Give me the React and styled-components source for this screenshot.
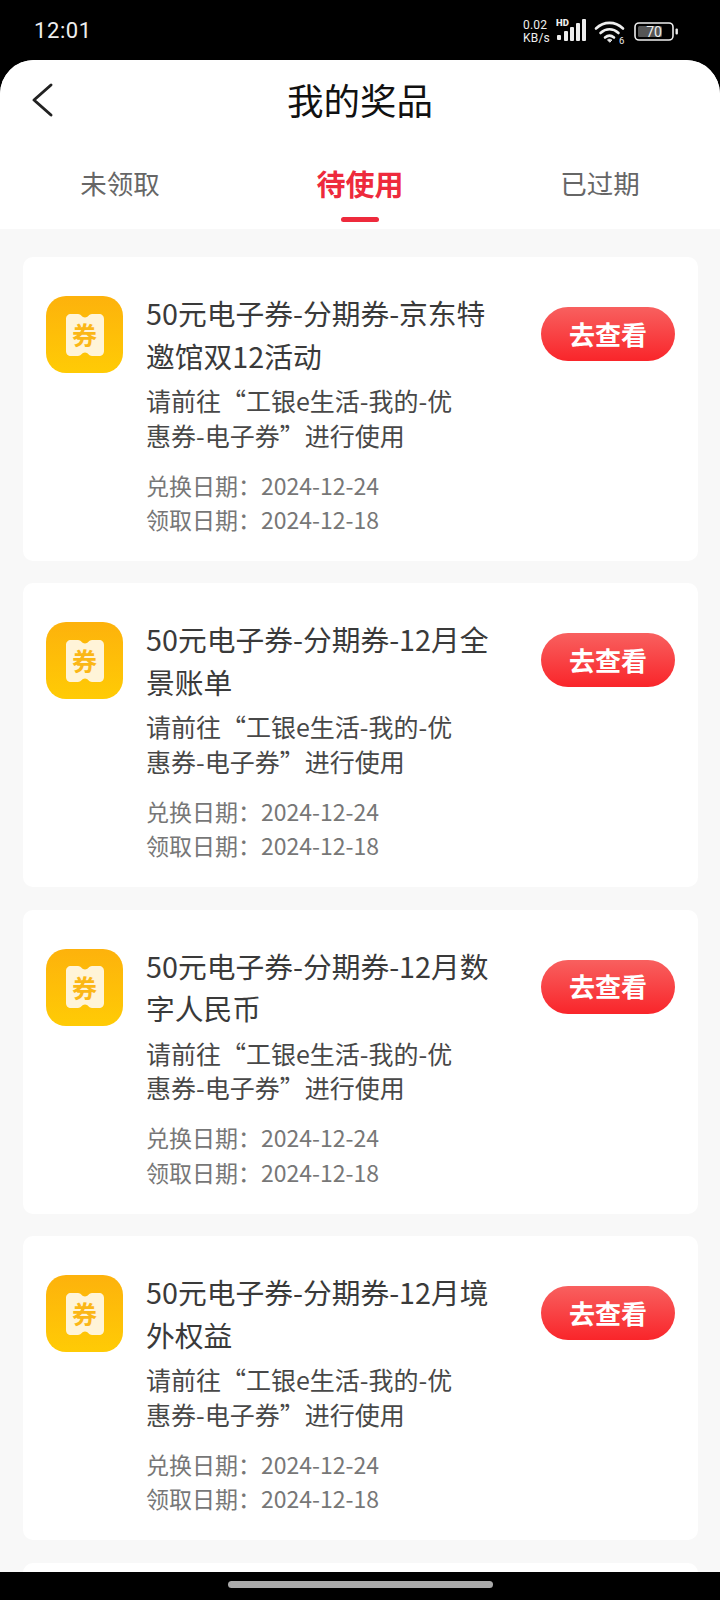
import React from "react";
import styled, { createGlobalStyle } from "styled-components";

const Global = createGlobalStyle`
  html, body { margin: 0; padding: 0; background: #000; }
  * { box-sizing: border-box; }
`;

const Font = `"Noto Sans CJK SC", "Noto Sans", sans-serif`;

const Screen = styled.div`
  width: 720px;
  height: 1600px;
  display: flex;
  flex-direction: column;
  background: #000;
  font-family: ${Font};
  overflow: hidden;
`;

const StatusBar = styled.div`
  height: 60px;
  flex: none;
  display: flex;
  align-items: center;
  justify-content: space-between;
  padding: 0 40px 0 34px;
  color: #eee;
`;

const Clock = styled.span`
  font-family: Roboto, sans-serif;
  font-size: 22px;
  letter-spacing: 0.6px;
  line-height: 1;
  margin-top: 2px;
`;

const StatusIcons = styled.div`
  display: flex;
  align-items: center;
  margin-top: 4px;
`;

const Speed = styled.div`
  font-family: Roboto, sans-serif;
  font-size: 12px;
  line-height: 13px;
  width: 33px;
  color: #eee;
  letter-spacing: 0.2px;
`;

const Sheet = styled.div`
  flex: 1;
  min-height: 0;
  display: flex;
  flex-direction: column;
  background: #f8f8f8;
  border-radius: 34px 34px 0 0;
  overflow: hidden;
`;

const Top = styled.div`
  flex: none;
  height: 169px;
  background: #fff;
  display: flex;
  flex-direction: column;
`;

const NavBar = styled.div`
  height: 85px;
  flex: none;
  display: flex;
  align-items: center;
  justify-content: center;
  position: relative;
`;

const Back = styled.svg`
  position: absolute;
  left: 30px;
  top: 22px;
`;

const Title = styled.h1`
  margin: -6px 0 0;
  font-size: 36.5px;
  font-weight: 400;
  line-height: 50px;
  color: #111;
`;

const Tabs = styled.div`
  flex: 1;
  display: grid;
  grid-template-columns: 1fr 1fr 1fr;
`;

const Tab = styled.div`
  display: flex;
  flex-direction: column;
  align-items: center;
  position: relative;
  padding-top: 18px;
  font-size: ${p => (p.$active ? "29px" : "26.5px")};
  line-height: 40px;
  font-weight: ${p => (p.$active ? 700 : 400)};
  color: ${p => (p.$active ? "#ee2a3c" : "#666")};
`;

const Underline = styled.div`
  position: absolute;
  top: 72px;
  width: 38px;
  height: 5px;
  border-radius: 3px;
  background: #ee2a3c;
`;

const List = styled.div`
  flex: 1;
  min-height: 0;
  overflow: hidden;
  padding: 28px 22px 0 23px;
  display: flex;
  flex-direction: column;
  gap: 22.4px;
`;

const Card = styled.div`
  flex: none;
  height: 304px;
  background: #fff;
  border-radius: 10px;
  padding: 39px 23px 0 23px;
  display: flex;
  align-items: flex-start;
`;

const IconBox = styled.div`
  flex: none;
  width: 77px;
  height: 77px;
  border-radius: 20px;
  background: linear-gradient(180deg, #fdb20c 0%, #ffcb05 100%);
  display: flex;
  align-items: center;
  justify-content: center;
  position: relative;
`;

const TicketGlyph = styled.span`
  position: absolute;
  font-size: 25px;
  font-weight: 700;
  color: #fbb716;
  line-height: 1;
`;

const Info = styled.div`
  flex: 1;
  min-width: 0;
  margin-left: 23px;
  margin-top: -4px;
`;

const ItemTitle = styled.div`
  width: 352px;
  font-size: 28.75px;
  line-height: 42.5px;
  color: #3a3a3a;
`;

const Desc = styled.div`
  width: 312px;
  margin-top: 6px;
  font-size: 25px;
  line-height: 34.5px;
  color: #484848;
`;

const Dates = styled.div`
  margin-top: 15.5px;
  font-size: 23px;
  line-height: 34.5px;
  color: #777;
`;

const ViewButton = styled.div`
  flex: none;
  width: 134px;
  height: 54px;
  margin-top: 11px;
  padding-bottom: 2px;
  border-radius: 27px;
  background: linear-gradient(180deg, #f8605f 0%, #f9252a 100%);
  color: #fff;
  font-size: 26px;
  font-weight: 700;
  display: flex;
  align-items: center;
  justify-content: center;
`;

const NavStrip = styled.div`
  flex: none;
  height: 28px;
  background: #000;
  display: flex;
  justify-content: center;
  padding-top: 9px;
`;

const HomePill = styled.div`
  width: 265px;
  height: 7px;
  border-radius: 4px;
  background: #aaa;
`;

const TicketIcon = () => (
  <IconBox>
    <svg width="38" height="42" viewBox="0 0 38 42">
      <path d="M5 0H12C15 0 16 3.5 19 3.5S23 0 26 0H33C36 0 38 2 38 5V37C38 40 36 42 33 42H26C23 42 22 38.5 19 38.5S15 42 12 42H5C2 42 0 40 0 37V5C0 2 2 0 5 0Z" fill="#fff4d8" />
    </svg>
    <TicketGlyph>券</TicketGlyph>
  </IconBox>
);

const Signal = () => (
  <svg width="32" height="30" viewBox="0 0 32 30" fill="#eee">
    <text x="0" y="9" fontFamily="Roboto, sans-serif" fontWeight="900" fontSize="9.5">HD</text>
    <rect x="1" y="18" width="4" height="5" rx="1" />
    <rect x="8" y="14" width="4" height="10" rx="1" />
    <rect x="14" y="10" width="4" height="14" rx="1" />
    <rect x="20" y="6" width="4" height="18" rx="1" />
    <rect x="26" y="2" width="4" height="22" rx="1" />
  </svg>
);

const Wifi = () => (
  <svg width="32" height="26" viewBox="0 0 32 26" fill="none" stroke="#eee" strokeWidth="2.6" strokeLinecap="round" style={{ marginLeft: 6 }}>
    <path d="M2 9.5C10 2 21 2 29 9.5" />
    <path d="M6.5 14C12 9 19 9 24.5 14" />
    <path d="M11 18.5C14 16 17 16 20 18.5" />
    <path d="M15.5 23L13.5 20.8C14.8 20 16.2 20 17.5 20.8Z" fill="#eee" strokeWidth="1" />
    <text x="25" y="25" fill="#eee" stroke="none" fontFamily="Roboto, sans-serif" fontSize="9.5">6</text>
  </svg>
);

const Battery = () => (
  <svg width="46" height="20" viewBox="0 0 46 20" style={{ marginLeft: 8 }}>
    <rect x="1" y="1" width="38" height="17" rx="4" fill="none" stroke="#eee" strokeWidth="1.6" />
    <rect x="4" y="4" width="24" height="11" rx="1.5" fill="#555" />
    <rect x="41.5" y="6.5" width="2.4" height="6" rx="1" fill="#eee" />
    <text x="20" y="15" textAnchor="middle" fill="#eee" fontFamily="Roboto, sans-serif" fontSize="14">70</text>
  </svg>
);

const prizes = [
  "50元电子券-分期券-京东特邀馆双12活动",
  "50元电子券-分期券-12月全景账单",
  "50元电子券-分期券-12月数字人民币",
  "50元电子券-分期券-12月境外权益",
];

export default function App() {
  return (
    <Screen>
      <Global />
      <StatusBar>
        <Clock>12:01</Clock>
        <StatusIcons>
          <Speed>0.02<br />KB/s</Speed>
          <Signal />
          <Wifi />
          <Battery />
        </StatusIcons>
      </StatusBar>
      <Sheet>
        <Top>
          <NavBar>
            <Back width="24" height="36" viewBox="0 0 24 36" fill="none" stroke="#222" strokeWidth="3" strokeLinecap="round" strokeLinejoin="round">
              <path d="M21 3L4 18L21 33" />
            </Back>
            <Title>我的奖品</Title>
          </NavBar>
          <Tabs>
            <Tab>未领取</Tab>
            <Tab $active>待使用<Underline /></Tab>
            <Tab>已过期</Tab>
          </Tabs>
        </Top>
        <List>
          {prizes.map(t => (
            <Card key={t}>
              <TicketIcon />
              <Info>
                <ItemTitle>{t}</ItemTitle>
                <Desc>请前往“工银e生活-我的-优惠券-电子券”进行使用</Desc>
                <Dates>兑换日期：2024-12-24<br />领取日期：2024-12-18</Dates>
              </Info>
              <ViewButton>去查看</ViewButton>
            </Card>
          ))}
          <Card />
        </List>
      </Sheet>
      <NavStrip><HomePill /></NavStrip>
    </Screen>
  );
}
